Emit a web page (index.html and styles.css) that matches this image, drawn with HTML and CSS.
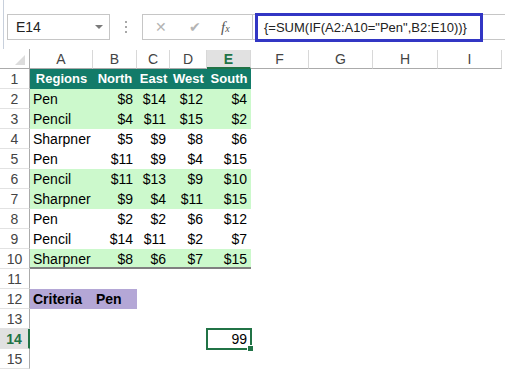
FILE: index.html
```html
<!DOCTYPE html>
<html lang="en">
<head>
  <meta charset="UTF-8">
  <title>Array formula - SUM IF</title>
  <link rel="stylesheet" href="styles.css">
</head>
<body>
  <div class="toolbar">
    <div class="name-box">
      <span>E14</span>
      <span class="arrow"></span>
    </div>
    <div class="dots"><i></i><i></i><i></i></div>
    <div class="fx-box">
      <span class="btn-cancel">&#x2715;</span>
      <span class="btn-ok">&#x2714;</span>
      <span class="btn-fx">f<small>x</small></span>
    </div>
    <div class="formula">
      <div class="formula-text">{=SUM(IF(A2:A10="Pen",B2:E10))}</div>
    </div>
  </div>

  <div class="sheet" id="sheet"></div>

  <script>
    const sheet = document.getElementById("sheet");
    const cols = ["A", "B", "C", "D", "E", "F", "G", "H", "I"];

    const data = [
      ["Regions", "North", "East", "West", "South"],
      ["Pen", "$8", "$14", "$12", "$4"],
      ["Pencil", "$4", "$11", "$15", "$2"],
      ["Sharpner", "$5", "$9", "$8", "$6"],
      ["Pen", "$11", "$9", "$4", "$15"],
      ["Pencil", "$11", "$13", "$9", "$10"],
      ["Sharpner", "$9", "$4", "$11", "$15"],
      ["Pen", "$2", "$2", "$6", "$12"],
      ["Pencil", "$14", "$11", "$2", "$7"],
      ["Sharpner", "$8", "$6", "$7", "$15"],
      [],
      ["Criteria", "Pen"],
      [],
      ["", "", "", "", "99"],
      []
    ];
    const greenRows = [2, 3, 6, 7, 10];

    function addCell(cls, text) {
      const cell = document.createElement("div");
      cell.className = cls;
      cell.textContent = text || "";
      sheet.appendChild(cell);
      return cell;
    }

    // column headers
    addCell("corner");
    cols.forEach(c => addCell(c === "E" ? "col-head active" : "col-head", c));

    // rows
    data.forEach((row, i) => {
      const n = i + 1;
      addCell(n === 14 ? "row-head active" : "row-head", n);
      cols.forEach((c, j) => {
        let cls = "cell";
        const value = row[j] || "";
        if (j < 5) {
          if (n === 1) cls += " head";
          else if (greenRows.includes(n)) cls += " green";
          if (n === 10) cls += " last";
          if (n === 12 && j < 2) cls += " criteria";
          if (n > 1 && n !== 12 && j > 0) cls += " num";
        }
        if (n === 14 && c === "E") cls += " selected";
        addCell(cls, value);
      });
    });
  </script>
</body>
</html>
```

FILE: styles.css
```css
body {
  margin: 0;
  background: white;
  font-family: 'Liberation Sans', Arial, sans-serif;
  font-size: 13px;
  color: #000;
}

.toolbar {
  display: flex;
  align-items: flex-start;
  height: 49px;
  box-sizing: border-box;
  margin-left: 3px;
  padding-top: 14px;
  border-left: 1px solid #c8d0dc;
}
.name-box {
  display: flex;
  align-items: center;
  justify-content: space-between;
  width: 103px;
  height: 26px;
  box-sizing: border-box;
  margin-left: 3px;
  padding: 0 6px 0 8px;
  border: 1px solid #c6c6c6;
  color: #222;
  font-size: 14px;
}
.name-box .arrow {
  width: 0;
  height: 0;
  border-left: 4px solid transparent;
  border-right: 4px solid transparent;
  border-top: 4px solid #7a7a7a;
}
.dots {
  width: 32px;
  height: 26px;
  display: flex;
  flex-direction: column;
  align-items: center;
  justify-content: center;
  gap: 3px;
}
.dots i {
  width: 2px;
  height: 2px;
  background: #a8a8a8;
}
.fx-box {
  display: flex;
  align-items: center;
  width: 110px;
  height: 26px;
  box-sizing: border-box;
  border: 1px solid #c6c6c6;
  border-right: none;
  color: #b4b4b4;
}
.btn-cancel { margin-left: 12px; font-size: 14px; }
.btn-ok { margin-left: 22px; font-size: 14px; }
.btn-fx {
  margin-left: 20px;
  font-family: 'Liberation Serif', serif;
  font-style: italic;
  font-size: 15px;
  color: #555;
}
.btn-fx small { font-size: 10px; }
.formula {
  flex: 1;
  display: flex;
  align-items: center;
  height: 26px;
  box-sizing: border-box;
  border: 1px solid #c6c6c6;
  border-right: none;
}
.formula-text {
  width: 228px;
  height: 29px;
  box-sizing: border-box;
  margin-left: 2px;
  padding-left: 6px;
  border: 3px solid #3236c4;
  line-height: 23px;
  font-size: 13px;
  color: #222;
  white-space: nowrap;
}

.sheet {
  display: grid;
  grid-template-columns: 30px 63px 44px 33px 37px 44px 58px 64px 65px 64px;
  grid-auto-rows: 20px;
}
.corner {
  position: relative;
  border-right: 1px solid #ababab;
  border-bottom: 1px solid #ababab;
}
.corner::after {
  content: "";
  position: absolute;
  right: 4px;
  bottom: 3px;
  width: 0;
  height: 0;
  border-left: 10px solid transparent;
  border-bottom: 10px solid #dcdcdc;
}
.col-head {
  box-sizing: border-box;
  border-right: 1px solid #d8d8d8;
  border-bottom: 1px solid #ababab;
  margin-top: 1px;
  text-align: center;
  line-height: 19px;
  color: #444;
  font-size: 14px;
}
.row-head {
  box-sizing: border-box;
  border-right: 1px solid #ababab;
  border-bottom: 1px solid #e2e2e2;
  text-align: center;
  line-height: 20px;
  color: #444;
  font-size: 14px;
}
.col-head.active {
  background: #e1e1e1;
  border-bottom: 2px solid #217346;
  color: #217346;
  font-weight: bold;
}
.row-head.active {
  background: #e1e1e1;
  border-right: 2px solid #217346;
  color: #217346;
  font-weight: bold;
}

.cell {
  position: relative;
  box-sizing: border-box;
  padding: 0 3px;
  line-height: 20px;
  white-space: nowrap;
  font-size: 14px;
}
.cell.num { text-align: right; padding-right: 4px; }
.cell.head {
  background: #127b69;
  color: white;
  font-weight: bold;
  font-size: 13px;
  text-align: center;
  padding: 0;
}
.cell.green { background: #ccf9cc; }
.cell.last { border-bottom: 2px solid #808080; }
.cell.criteria {
  background: #b4a7d6;
  font-weight: bold;
}
.cell.selected {
  outline: 2px solid #217346;
  outline-offset: -1px;
}
.cell.selected::after {
  content: "";
  position: absolute;
  right: -3px;
  bottom: -3px;
  width: 5px;
  height: 5px;
  background: #217346;
  border: 1px solid white;
}
```
